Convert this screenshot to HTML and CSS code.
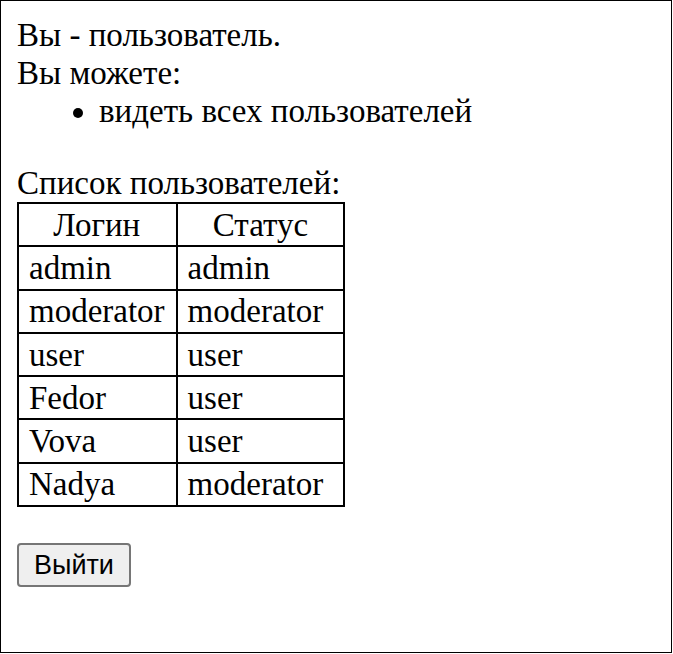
FILE: index.html
```html
<!DOCTYPE html>
<html>
<head>
<meta charset="utf-8">
<link rel="stylesheet" href="styles.css">
</head>
<body>
<div class="frame">
  <div class="content">
    <div class="line">Вы - пользователь.</div>
    <div class="line">Вы можете:</div>
    <ul class="perms">
      <li>видеть всех пользователей</li>
    </ul>
    <div class="line">Список пользователей:</div>
    <table class="users">
      <tr><th>Логин</th><th>Статус</th></tr>
      <tr><td>admin</td><td>admin</td></tr>
      <tr><td>moderator</td><td>moderator</td></tr>
      <tr><td>user</td><td>user</td></tr>
      <tr><td>Fedor</td><td>user</td></tr>
      <tr><td>Vova</td><td>user</td></tr>
      <tr><td>Nadya</td><td>moderator</td></tr>
    </table>
    <button class="logout">Выйти</button>
  </div>
</div>
</body>
</html>
```

FILE: styles.css
```css
html, body {
  margin: 0;
  padding: 0;
  background: #fff;
}
.frame {
  box-sizing: border-box;
  width: 672px;
  height: 653px;
  border: 1px solid #000;
  padding: 15px 16px;
}
.content {
  font-family: "Liberation Serif", "Times New Roman", serif;
  font-size: 33px;
  line-height: 38px;
  color: #000;
}
.perms {
  margin: 0 0 34px 0;
  padding-left: 82px;
}
.users {
  border-collapse: collapse;
  border: 2px solid #000;
  margin-top: 0;
}
.users th,
.users td {
  border: 2px solid #000;
  font-weight: normal;
  height: 39.3px;
  padding: 1px 11px 1px 10px;
  text-align: left;
  vertical-align: middle;
}
.users th {
  text-align: center;
}
.users td:nth-child(2) {
  padding-left: 10px;
  padding-right: 20px;
}
.users th:nth-child(2) {
  padding-left: 15px;
  padding-right: 15px;
}
.logout {
  display: block;
  margin-top: 36px;
  font-family: "Liberation Sans", Arial, sans-serif;
  font-size: 27px;
  line-height: 32px;
  padding: 4px 15px;
  background: #efefef;
  color: #000;
  border: 2px solid #767676;
  border-radius: 4px;
}
```
